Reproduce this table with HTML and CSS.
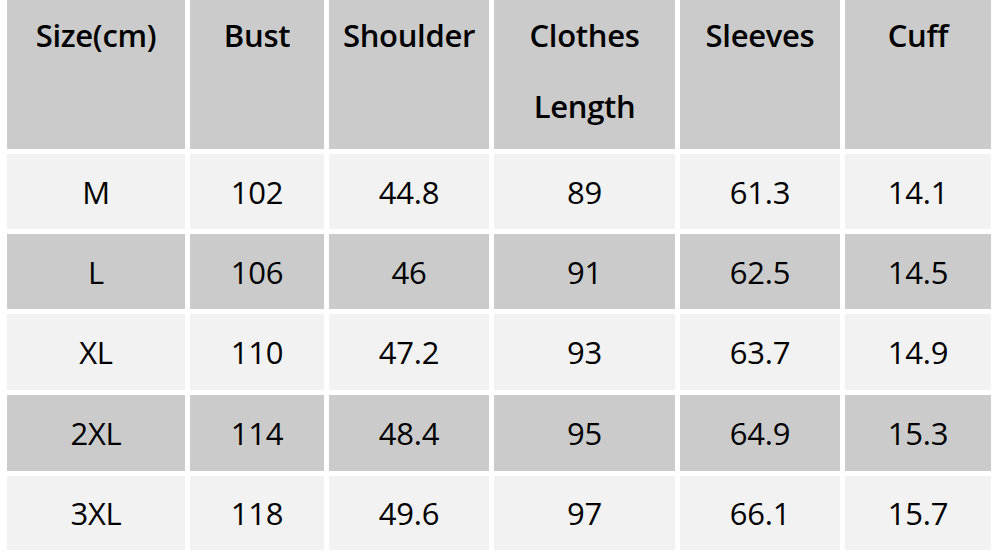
FILE: index.html
```html
<!DOCTYPE html>
<html>
<head>
<meta charset="utf-8">
<link rel="stylesheet" href="styles.css">
</head>
<body>
<div class="table">
  <div class="cell head">Size(cm)</div>
  <div class="cell head">Bust</div>
  <div class="cell head">Shoulder</div>
  <div class="cell head">Clothes<br>Length</div>
  <div class="cell head">Sleeves</div>
  <div class="cell head">Cuff</div>

  <div class="cell light">M</div>
  <div class="cell light">102</div>
  <div class="cell light">44.8</div>
  <div class="cell light">89</div>
  <div class="cell light">61.3</div>
  <div class="cell light">14.1</div>

  <div class="cell dark">L</div>
  <div class="cell dark">106</div>
  <div class="cell dark">46</div>
  <div class="cell dark">91</div>
  <div class="cell dark">62.5</div>
  <div class="cell dark">14.5</div>

  <div class="cell light">XL</div>
  <div class="cell light">110</div>
  <div class="cell light">47.2</div>
  <div class="cell light">93</div>
  <div class="cell light">63.7</div>
  <div class="cell light">14.9</div>

  <div class="cell dark">2XL</div>
  <div class="cell dark">114</div>
  <div class="cell dark">48.4</div>
  <div class="cell dark">95</div>
  <div class="cell dark">64.9</div>
  <div class="cell dark">15.3</div>

  <div class="cell light">3XL</div>
  <div class="cell light">118</div>
  <div class="cell light">49.6</div>
  <div class="cell light">97</div>
  <div class="cell light">66.1</div>
  <div class="cell light">15.7</div>
</div>
</body>
</html>
```
FILE: styles.css
```css
html, body {
  margin: 0;
  padding: 0;
  background: #ffffff;
}
body {
  width: 1000px;
  height: 556px;
  overflow: hidden;
  font-family: "Open Sans", "Noto Sans", sans-serif;
  color: #000000;
}
.table {
  display: grid;
  grid-template-columns: 178px 134px 160px 181px 160px 146px;
  grid-template-rows: 149px 75px 75px 76px 76px 74px;
  gap: 5px;
  margin-left: 7px;
}
.cell {
  display: flex;
  align-items: center;
  justify-content: center;
  text-align: center;
  font-size: 31px;
  letter-spacing: -0.2px;
}
.head {
  background: #cbcbcb;
  align-items: flex-start;
  font-weight: 600;
  line-height: 71px;
  letter-spacing: -0.3px;
}
.light {
  background: #f2f2f2;
}
.dark {
  background: #cbcbcb;
}
```
